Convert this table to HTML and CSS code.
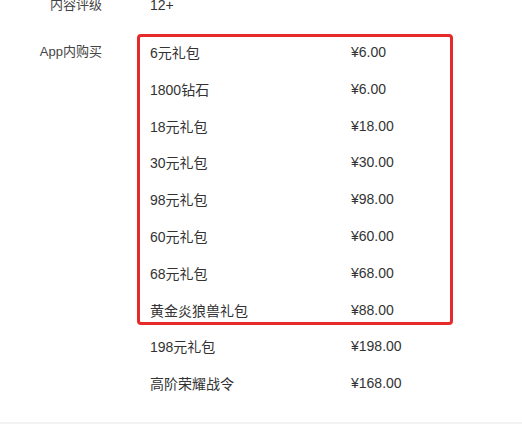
FILE: index.html
```html
<!DOCTYPE html>
<html lang="zh-CN">
<head>
  <meta charset="UTF-8" />
  <title>App信息</title>
  <link rel="stylesheet" href="styles.css">
</head>
<body>
  <dl class="info">
    <div class="info-row">
      <dt>内容评级</dt>
      <dd><div class="item">12+</div></dd>
    </div>
    <div class="info-row">
      <dt>App内购买</dt>
      <dd>
        <ul class="iap marked">
          <li class="item"><span class="name">6元礼包</span><span class="price">¥6.00</span></li>
          <li class="item"><span class="name">1800钻石</span><span class="price">¥6.00</span></li>
          <li class="item"><span class="name">18元礼包</span><span class="price">¥18.00</span></li>
          <li class="item"><span class="name">30元礼包</span><span class="price">¥30.00</span></li>
          <li class="item"><span class="name">98元礼包</span><span class="price">¥98.00</span></li>
          <li class="item"><span class="name">60元礼包</span><span class="price">¥60.00</span></li>
          <li class="item"><span class="name">68元礼包</span><span class="price">¥68.00</span></li>
          <li class="item"><span class="name">黄金炎狼兽礼包</span><span class="price">¥88.00</span></li>
        </ul>
        <ul class="iap">
          <li class="item"><span class="name">198元礼包</span><span class="price">¥198.00</span></li>
          <li class="item"><span class="name">高阶荣耀战令</span><span class="price">¥168.00</span></li>
        </ul>
      </dd>
    </div>
  </dl>
  <div class="footer"></div>
</body>
</html>
```

FILE: styles.css
```css
body {
  margin: 0;
  font-family: "Liberation Sans", "Noto Sans CJK SC", sans-serif;
  font-size: 14px;
  color: #333;
  background: #fff;
}
.info {
  margin: -13.2px 0 0;
  padding-bottom: 20.6px;
}
.info-row {
  display: grid;
  grid-template-columns: 102px 1fr;
  column-gap: 38px;
  margin-bottom: 10px;
}
.info-row:last-child {
  margin-bottom: 0;
}
dt {
  text-align: right;
  font-size: 13px;
  line-height: 36.8px;
  color: #444;
}
dd {
  margin: 0;
}
.item {
  display: flex;
  align-items: center;
  height: 36.8px;
  padding-left: 10px;
}
.iap {
  list-style: none;
  margin: 0;
  padding: 0;
  width: 310px;
}
.name {
  width: 201px;
}
.marked {
  position: relative;
}
.marked::after {
  content: "";
  position: absolute;
  top: 0.4px;
  bottom: 3px;
  left: -3px;
  right: -3px;
  border: 3px solid #e62a2a;
  border-radius: 4px;
}
.footer {
  height: 10px;
  background: #f3f3f4;
}
```
